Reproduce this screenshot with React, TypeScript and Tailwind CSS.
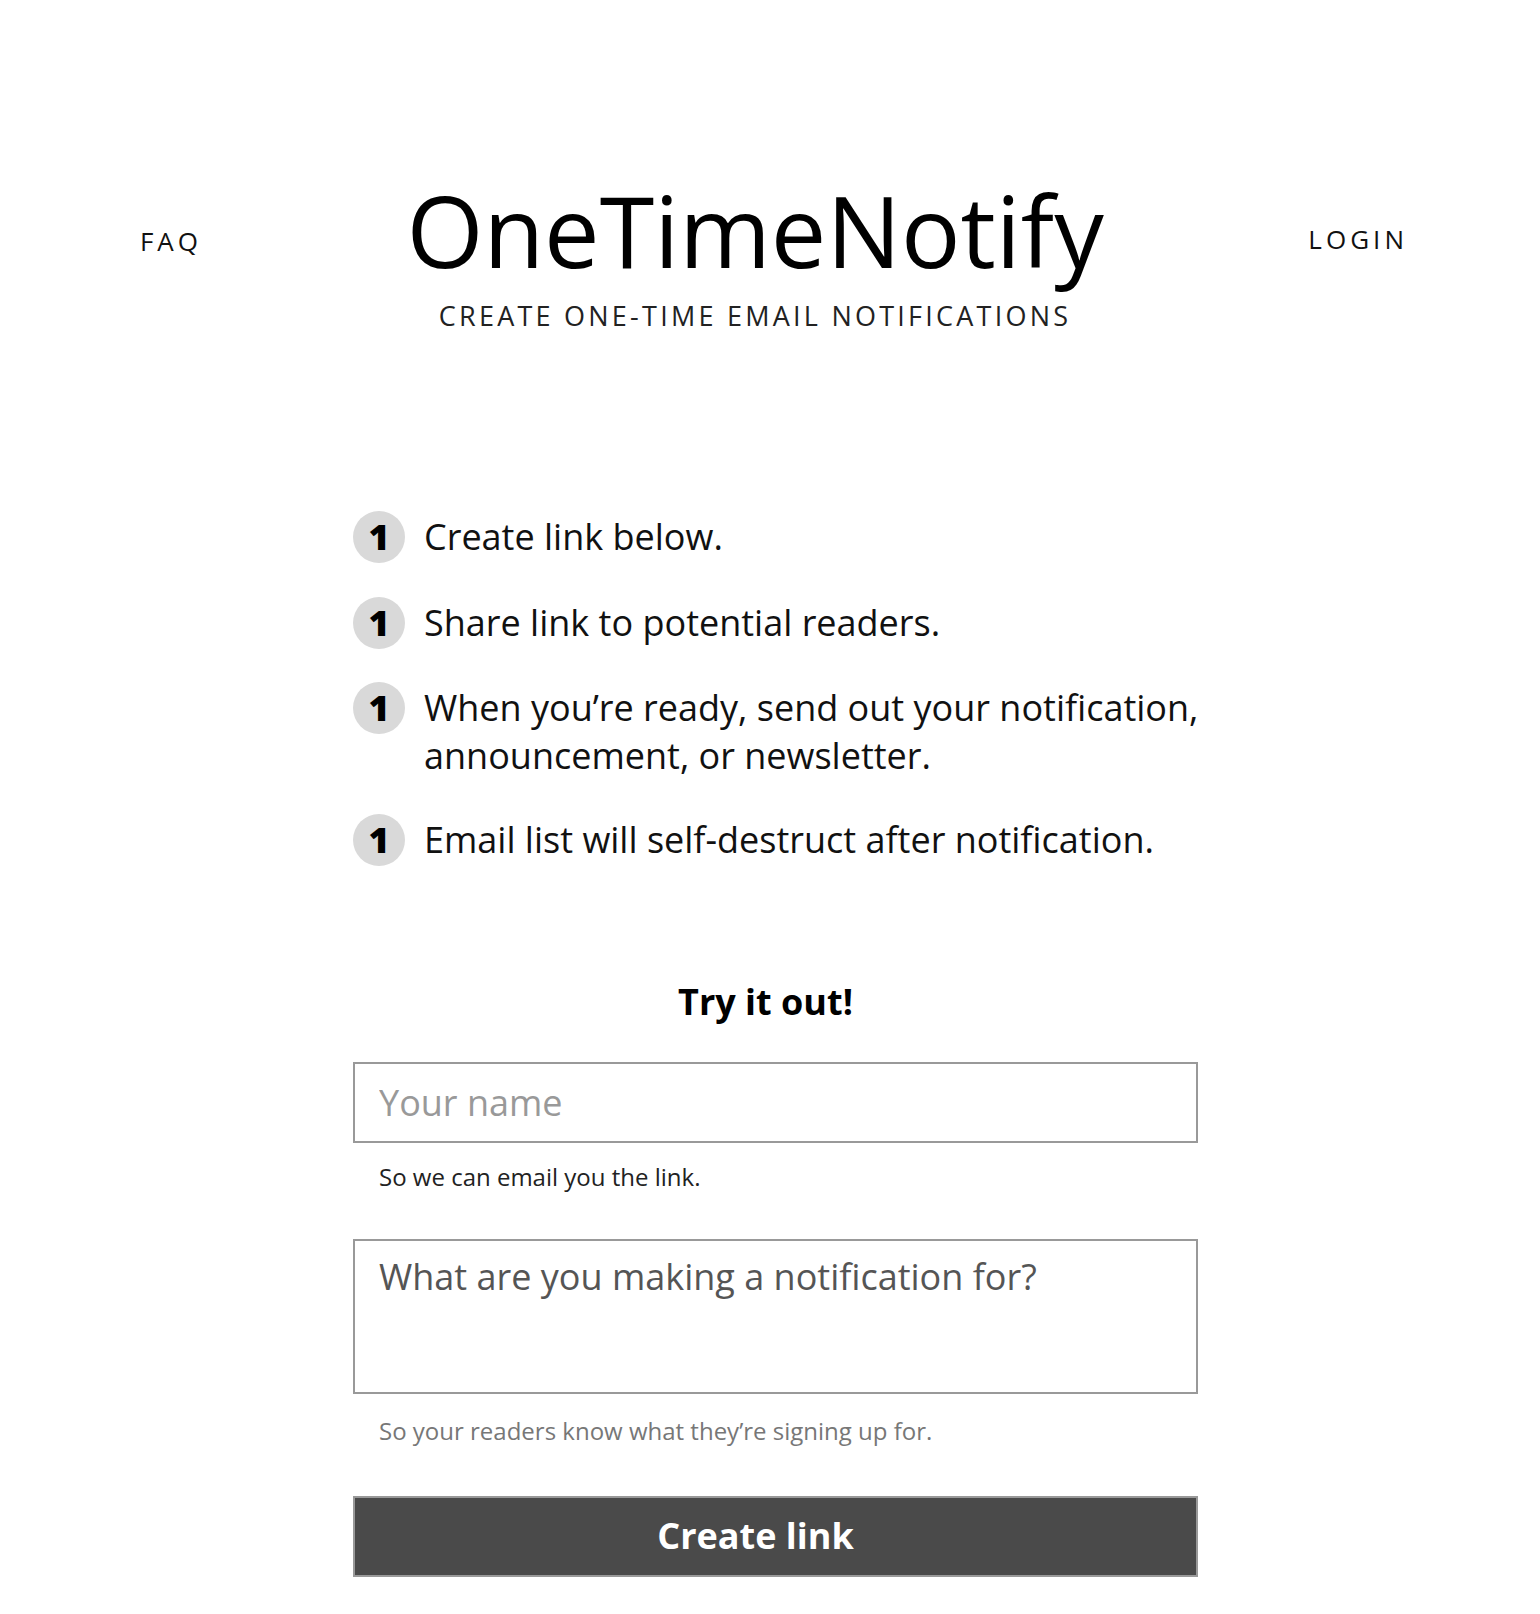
const steps = [
  ["Create link below."],
  ["Share link to potential readers."],
  ["When you’re ready, send out your notification,", "announcement, or newsletter."],
  ["Email list will self-destruct after notification."],
];

const App = () => {
  return (
    <div className="min-h-screen bg-white pb-[40px] font-['Open_Sans',sans-serif] text-black">
      <header className="flex items-start justify-between pl-[140px] pr-[132px] pt-[180px]">
        <a href="#faq" className="mt-[48px] text-[26px] leading-none tracking-[0.15em] text-[#111]">
          FAQ
        </a>
        <div className="flex flex-col items-center">
          <h1 className="text-[99px] leading-none">OneTimeNotify</h1>
          <p className="mt-[23px] text-[27px] leading-none tracking-[0.12em] text-[#222]">
            CREATE ONE-TIME EMAIL NOTIFICATIONS
          </p>
        </div>
        <a href="#login" className="mt-[46px] text-[26px] leading-none tracking-[0.155em] text-[#111]">
          LOGIN
        </a>
      </header>

      <main className="ml-[353px] w-[845px]">
        <ol className="mt-[184px] flex flex-col gap-[35.5px]">
          {steps.map((lines, i) => (
            <li key={i} className="flex items-start gap-[19px]">
              <span className="-mt-[2px] flex h-[52px] w-[52px] shrink-0 items-center justify-center rounded-full bg-[#d9d9d9] text-[36px] font-extrabold leading-none">
                1
              </span>
              <p className="whitespace-nowrap text-[36px] leading-[48px] text-[#111]">
                {lines.map((l, j) => (
                  <span key={j} className="block">
                    {l}
                  </span>
                ))}
              </p>
            </li>
          ))}
        </ol>

        <h2 className="mt-[118px] pr-[20px] text-center text-[36px] font-bold leading-none">Try it out!</h2>

        <form className="flex flex-col" onSubmit={(e) => e.preventDefault()}>
          <input
            type="text"
            placeholder="Your name"
            className="mt-[42px] h-[81px] w-full border-2 border-[#999] px-[24px] text-[36px] text-[#222] outline-none placeholder:text-[#999]"
          />
          <p className="mt-[22px] pl-[26px] text-[24px] leading-none text-[#222]">So we can email you the link.</p>

          <textarea
            placeholder="What are you making a notification for?"
            className="mt-[50px] h-[155px] w-full resize-none border-2 border-[#999] px-[24px] pt-[14px] text-[36px] leading-[1.2] text-[#222] outline-none placeholder:text-[#555]"
          />
          <p className="mt-[25px] pl-[26px] text-[24px] leading-none text-[#777]">
            So your readers know what they’re signing up for.
          </p>

          <button
            type="submit"
            className="mt-[53px] h-[81px] w-full border-2 border-[#999] bg-[#4a4a4a] pr-[40px] text-center text-[36px] font-bold text-white"
          >
            Create link
          </button>
        </form>
      </main>
    </div>
  );
};

export default App;
